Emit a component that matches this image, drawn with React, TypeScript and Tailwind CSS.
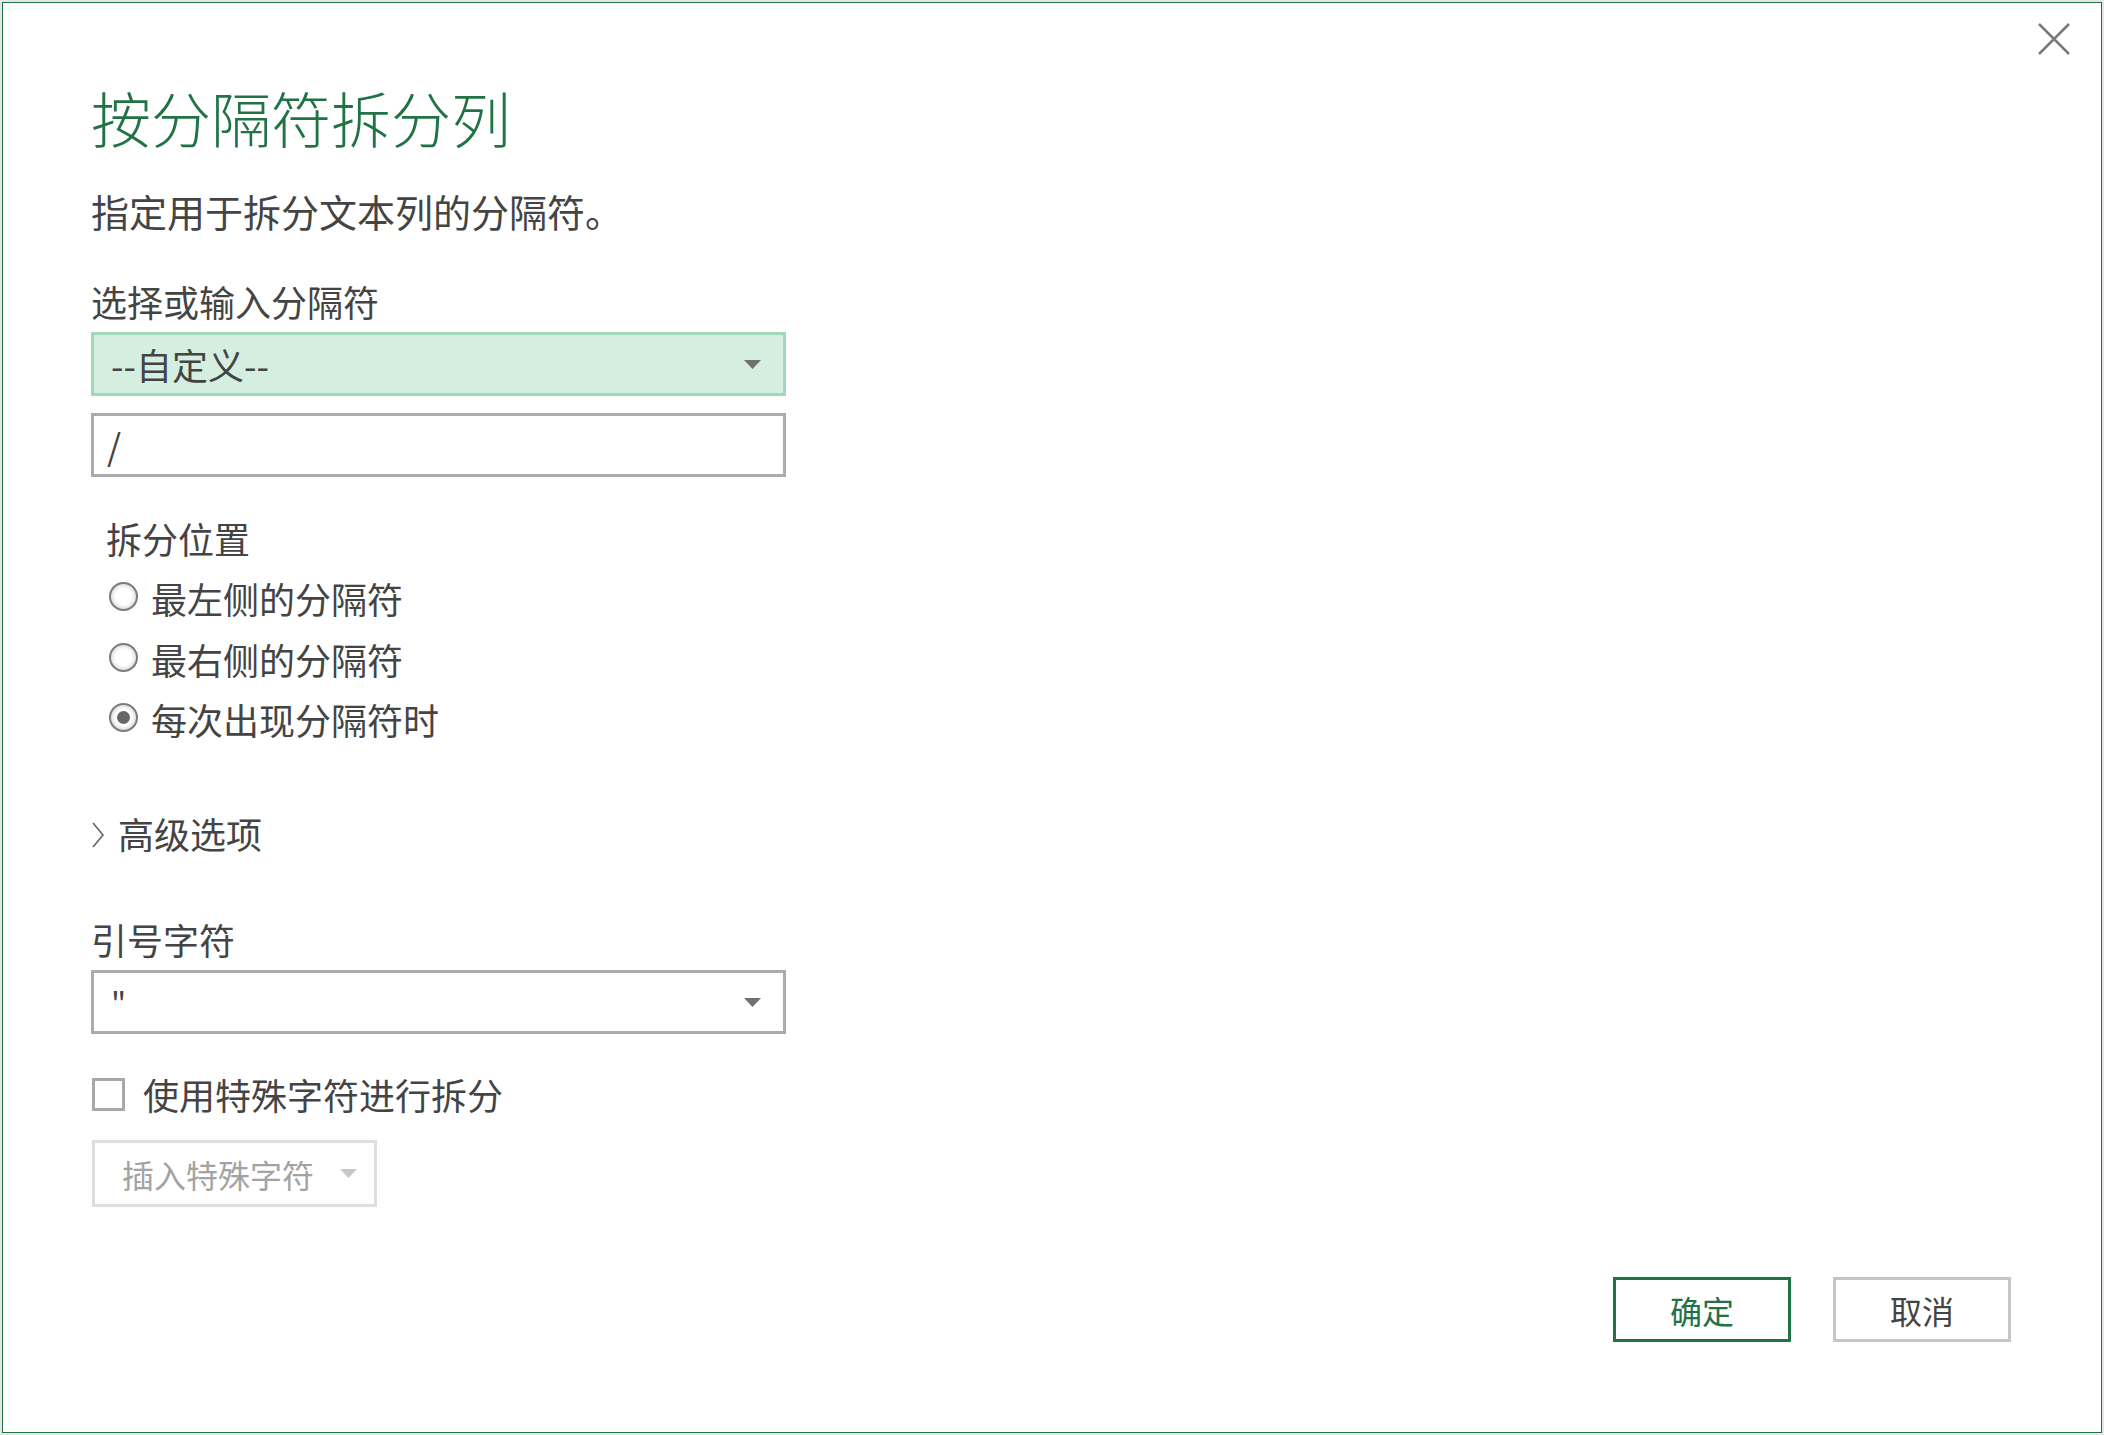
import React from "react";

const Arrow = ({ color = "#707070" }: { color?: string }) => (
  <svg width="17" height="9" viewBox="0 0 17 9" className="shrink-0">
    <path d="M0 0 L17 0 L8.5 9 Z" fill={color} />
  </svg>
);

const Radio = ({ checked, label }: { checked?: boolean; label: string }) => (
  <div className="flex h-[48px] items-center pl-[3px]">
    <div className="mb-[4px] flex h-[29px] w-[29px] shrink-0 items-center justify-center rounded-full border-2 border-[#7c7c7c] bg-[radial-gradient(circle,#ffffff_45%,#bdbdbd_100%)]">
      {checked && <div className="h-[13px] w-[13px] rounded-full bg-[#666666]" />}
    </div>
    <span className="ml-[13px] text-[36px] leading-[48px] text-[#444444]">{label}</span>
  </div>
);

export default function App() {
  return (
    <div className="h-[1435px] w-[2104px] bg-[#e6e6e6] p-[2px] font-['Noto_Sans_CJK_SC','Noto_Sans',sans-serif]">
      <div className="relative flex h-[1431px] w-[2100px] flex-col border-[1.5px] border-[#217346] bg-white pl-[88px] pt-[74px]">
        <button className="absolute right-[31px] top-[20px] h-[32px] w-[32px]" aria-label="关闭">
          <svg width="32" height="32" viewBox="0 0 32 32">
            <path d="M1 1 L31 31 M31 1 L1 31" stroke="#7a7a7a" strokeWidth="2.5" />
          </svg>
        </button>

        <h1 className="h-[80px] text-[60px] font-light leading-[80px] text-[#217346]">按分隔符拆分列</h1>

        <p className="mt-[29px] h-[50px] text-[38px] leading-[50px] text-[#444444]">指定用于拆分文本列的分隔符。</p>

        <div className="mt-[41px] h-[48px] text-[36px] leading-[48px] text-[#444444]">选择或输入分隔符</div>

        <div className="mt-[7px] flex h-[64px] w-[695px] items-center justify-between border-[3px] border-[#a1d7ba] bg-[#d4efe0] pl-[17px] pr-[22px]">
          <span className="text-[36px] leading-[48px] text-[#444444]">--自定义--</span>
          <Arrow />
        </div>

        <div className="mt-[17px] flex h-[64px] w-[695px] items-center border-[3px] border-[#ababab] bg-white pl-[13px]">
          <span className="text-[36px] leading-[48px] text-[#444444]">/</span>
        </div>

        <div className="ml-[15px] mt-[37px] flex flex-col">
          <div className="h-[48px] text-[36px] leading-[48px] text-[#444444]">拆分位置</div>
          <div className="mt-[12px]">
            <Radio label="最左侧的分隔符" />
          </div>
          <div className="mt-[13px]">
            <Radio label="最右侧的分隔符" />
          </div>
          <div className="mt-[12px]">
            <Radio checked label="每次出现分隔符时" />
          </div>
        </div>

        <div className="mt-[66px] flex h-[48px] items-center">
          <svg width="14" height="26" viewBox="0 0 14 26" className="mt-[4px] shrink-0">
            <path d="M2 1 L12 13 L2 25" fill="none" stroke="#666666" strokeWidth="1.6" />
          </svg>
          <span className="ml-[13px] text-[36px] leading-[48px] text-[#444444]">高级选项</span>
        </div>

        <div className="mt-[58px] h-[48px] text-[36px] leading-[48px] text-[#444444]">引号字符</div>

        <div className="mt-[7px] flex h-[64px] w-[695px] items-center justify-between border-[3px] border-[#ababab] bg-white pl-[17px] pr-[22px]">
          <span className="text-[32px] leading-[48px] text-[#444444]">"</span>
          <Arrow />
        </div>

        <div className="mt-[36px] flex h-[48px] items-center pl-[1px]">
          <div className="h-[33px] w-[33px] shrink-0 border-[3px] border-[#a8a8a8] bg-white" />
          <span className="ml-[18px] text-[36px] leading-[48px] text-[#444444]">使用特殊字符进行拆分</span>
        </div>

        <div className="ml-[1px] mt-[22px] flex h-[67px] w-[285px] items-center border-[3px] border-[#dedede] pl-[27px]">
          <span className="text-[32px] leading-[44px] text-[#a3a3a3]">插入特殊字符</span>
          <span className="ml-[26px]">
            <Arrow color="#c8c8c8" />
          </span>
        </div>

        <div className="mt-[70px] flex justify-end gap-[42px] pr-[90px]">
          <button className="flex h-[65px] w-[178px] items-center justify-center border-[3px] border-[#217346] bg-white text-[32px] leading-[44px] text-[#217346]">
            确定
          </button>
          <button className="flex h-[65px] w-[178px] items-center justify-center border-[3px] border-[#c6c6c6] bg-white text-[32px] leading-[44px] text-[#444444]">
            取消
          </button>
        </div>
      </div>
    </div>
  );
}
